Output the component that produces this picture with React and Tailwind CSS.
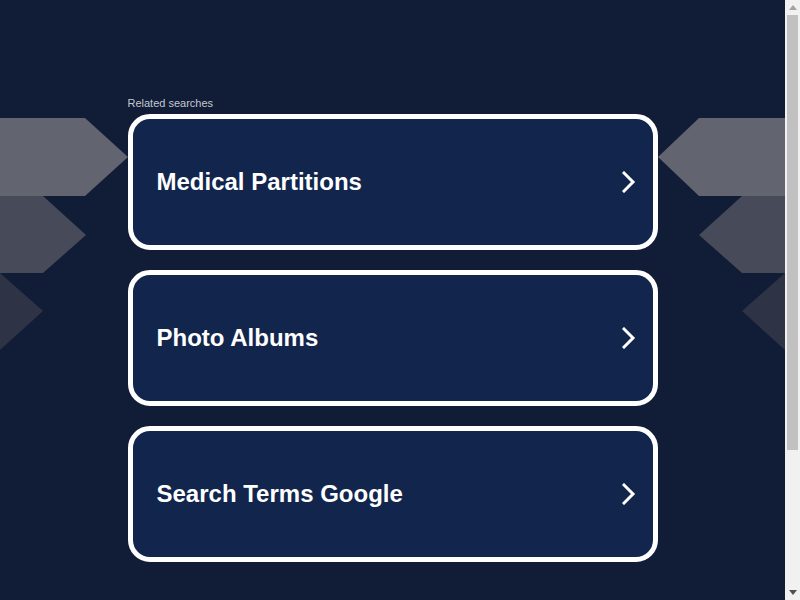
import React from 'react';

const searches = ['Medical Partitions', 'Photo Albums', 'Search Terms Google'];

const Chevron = () => (
  <svg width="14" height="22" viewBox="0 0 14 22" className="shrink-0">
    <polyline points="2,2 11,11 2,20" fill="none" stroke="#ffffff" strokeWidth="3" strokeLinecap="square" />
  </svg>
);

// background arrows, left and right
const SideArrows = () => (
  <svg className="absolute left-0 top-0 pointer-events-none" width="785" height="400" viewBox="0 0 785 400">
    <polygon points="0,118 85,118 128,157 85,196 0,196" fill="#62646f" />
    <polygon points="0,196 43,196 86,235 43,273 0,273" fill="#474a58" />
    <polygon points="0,273 0,273 43,311 0,350" fill="#2f3346" />
    <polygon points="785,118 699,118 658,157 699,196 785,196" fill="#62646f" />
    <polygon points="785,196 742,196 699,235 742,273 785,273" fill="#474a58" />
    <polygon points="785,273 785,273 742,311 785,350" fill="#2f3346" />
  </svg>
);

const Scrollbar = () => (
  <div className="w-[15px] h-full bg-[#f1f1f1] flex flex-col items-center">
    <div className="h-[15px] w-full flex items-center justify-center">
      <svg width="8" height="5" viewBox="0 0 8 5"><polygon points="0,5 4,0 8,5" fill="#a3a3a3" /></svg>
    </div>
    <div className="w-[11px] h-[435px] bg-[#c1c1c1]" />
    <div className="flex-1" />
    <div className="h-[15px] w-full flex items-center justify-center">
      <svg width="8" height="5" viewBox="0 0 8 5"><polygon points="0,0 8,0 4,5" fill="#505050" /></svg>
    </div>
  </div>
);

export default function App() {
  return (
    <div className="flex h-[600px] overflow-hidden bg-[#111c36] font-['Liberation_Sans',Arial,sans-serif]">
      <div className="relative flex-1">
        <SideArrows />
        <div className="relative mx-auto w-[530px] pt-[96px]">
          <p className="text-[11px] leading-[14px] text-[#c4c8d2] mb-[4px]">Related searches</p>
          <div className="flex flex-col gap-[20px]">
            {searches.map((s, i) => (
              <a
                key={i}
                href="#"
                className="flex items-center justify-between h-[136px] rounded-[22px] border-[5px] border-white bg-[#12254d] pl-[24px] pr-[17px]"
              >
                <span className="text-[24px] font-bold text-white leading-none">{s}</span>
                <Chevron />
              </a>
            ))}
          </div>
        </div>
      </div>
      <Scrollbar />
    </div>
  );
}
